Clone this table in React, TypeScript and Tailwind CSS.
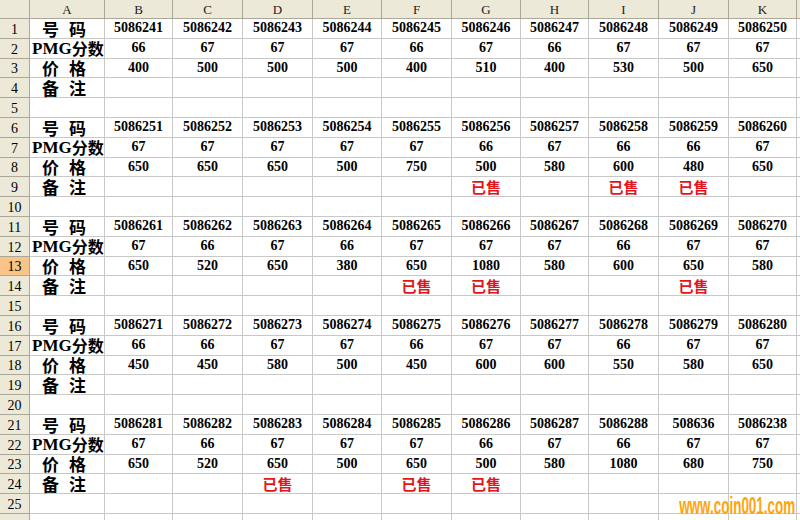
import React from 'react';

interface Block {
  ids: string[];
  pmg: number[];
  price: number[];
  sold: number[];
}

const letters = ['A', 'B', 'C', 'D', 'E', 'F', 'G', 'H', 'I', 'J', 'K'];

const blocks: Block[] = [
  {
    ids: ['5086241', '5086242', '5086243', '5086244', '5086245', '5086246', '5086247', '5086248', '5086249', '5086250'],
    pmg: [66, 67, 67, 67, 66, 67, 66, 67, 67, 67],
    price: [400, 500, 500, 500, 400, 510, 400, 530, 500, 650],
    sold: []
  },
  {
    ids: ['5086251', '5086252', '5086253', '5086254', '5086255', '5086256', '5086257', '5086258', '5086259', '5086260'],
    pmg: [67, 67, 67, 67, 67, 66, 67, 66, 66, 67],
    price: [650, 650, 650, 500, 750, 500, 580, 600, 480, 650],
    sold: [5, 7, 8]
  },
  {
    ids: ['5086261', '5086262', '5086263', '5086264', '5086265', '5086266', '5086267', '5086268', '5086269', '5086270'],
    pmg: [67, 66, 67, 66, 67, 67, 67, 66, 67, 67],
    price: [650, 520, 650, 380, 650, 1080, 580, 600, 650, 580],
    sold: [4, 5, 8]
  },
  {
    ids: ['5086271', '5086272', '5086273', '5086274', '5086275', '5086276', '5086277', '5086278', '5086279', '5086280'],
    pmg: [66, 66, 67, 67, 66, 67, 67, 66, 67, 67],
    price: [450, 450, 580, 500, 450, 600, 600, 550, 580, 650],
    sold: []
  },
  {
    ids: ['5086281', '5086282', '5086283', '5086284', '5086285', '5086286', '5086287', '5086288', '508636', '5086238'],
    pmg: [67, 66, 67, 67, 67, 66, 67, 66, 67, 67],
    price: [650, 520, 650, 500, 650, 500, 580, 1080, 680, 750],
    sold: [2, 4, 5]
  }
];

const SELECTED_ROW = 13;

function Label({ kind }: { kind: number }) {
  if (kind === 1) {
    return (
      <div className="flex items-center h-full pl-[2px] whitespace-nowrap overflow-x-clip text-[16px] leading-none font-bold">
        <span className="text-[17px]">PMG</span>
        <span className="[font-family:'Noto_Sans_CJK_SC',sans-serif]">分数</span>
      </div>
    );
  }
  const pair = kind === 0 ? ['号', '码'] : kind === 2 ? ['价', '格'] : kind === 3 ? ['备', '注'] : null;
  if (!pair) return null;
  return (
    <div className="flex items-center h-full pl-[12px] gap-[10px] text-[17px] leading-none font-bold [font-family:'Noto_Sans_CJK_SC',sans-serif]">
      <span>{pair[0]}</span>
      <span>{pair[1]}</span>
    </div>
  );
}

function DataCell({ block, kind, col }: { block: Block; kind: number; col: number }) {
  if (kind === 0) return <span>{block.ids[col]}</span>;
  if (kind === 1) return <span>{block.pmg[col]}</span>;
  if (kind === 2) return <span>{block.price[col]}</span>;
  if (kind === 3 && block.sold.includes(col)) {
    return (
      <span className="text-[15px] leading-none text-[#e3151b] [font-family:'Noto_Sans_CJK_SC',sans-serif]">已售</span>
    );
  }
  return null;
}

export default function App() {
  const rows = Array.from({ length: 26 }, (_, i) => i + 1);

  return (
    <div className="relative w-[800px] h-[520px] overflow-hidden bg-white text-black [font-family:'Liberation_Serif','Noto_Sans_CJK_SC',serif]">
      <div className="grid grid-cols-[30px_75px_68px_70px_70px_69px_70px_69px_68px_70px_70px_68px_1fr] grid-rows-[19px_repeat(26,19.8px)]">
        {/* column headers */}
        <div className="bg-[#ece9d8] border-r border-b border-[#aca899]" />
        {letters.map((l) => (
          <div
            key={l}
            className="flex items-center justify-center bg-[#ece9d8] border-r border-b border-[#aca899] text-[13px] leading-none text-[#222]"
          >
            {l}
          </div>
        ))}
        <div className="bg-[#ece9d8] border-b border-[#aca899]" />

        {rows.map((r) => {
          const kind = (r - 1) % 5;
          const block = blocks[Math.floor((r - 1) / 5)];
          const selected = r === SELECTED_ROW;
          return (
            <React.Fragment key={r}>
              <div
                className={
                  selected
                    ? 'flex items-center justify-center pt-[3px] bg-[#f8c488] border-r border-b border-[#aca899] text-[14px] leading-none'
                    : 'flex items-center justify-center pt-[3px] bg-[#ece9d8] border-r border-b border-[#aca899] text-[14px] leading-none'
                }
              >
                {r <= 25 ? r : ''}
              </div>
              <div className="border-r border-b border-[#c8c8c8]">
                {block && <Label kind={kind} />}
              </div>
              {Array.from({ length: 10 }, (_, c) => (
                <div
                  key={c}
                  className="flex items-center justify-center border-r border-b border-[#c8c8c8] text-[14px] leading-none font-bold"
                >
                  {block && <DataCell block={block} kind={kind} col={c} />}
                </div>
              ))}
              <div className="border-b border-[#c8c8c8]" />
            </React.Fragment>
          );
        })}
      </div>

      <div className="absolute right-[5px] bottom-[2px] origin-right scale-x-[0.56] text-[24px] leading-[24px] font-bold text-[#ffa30d] [font-family:'Liberation_Sans',sans-serif]">
        www.coin001.com
      </div>
    </div>
  );
}
